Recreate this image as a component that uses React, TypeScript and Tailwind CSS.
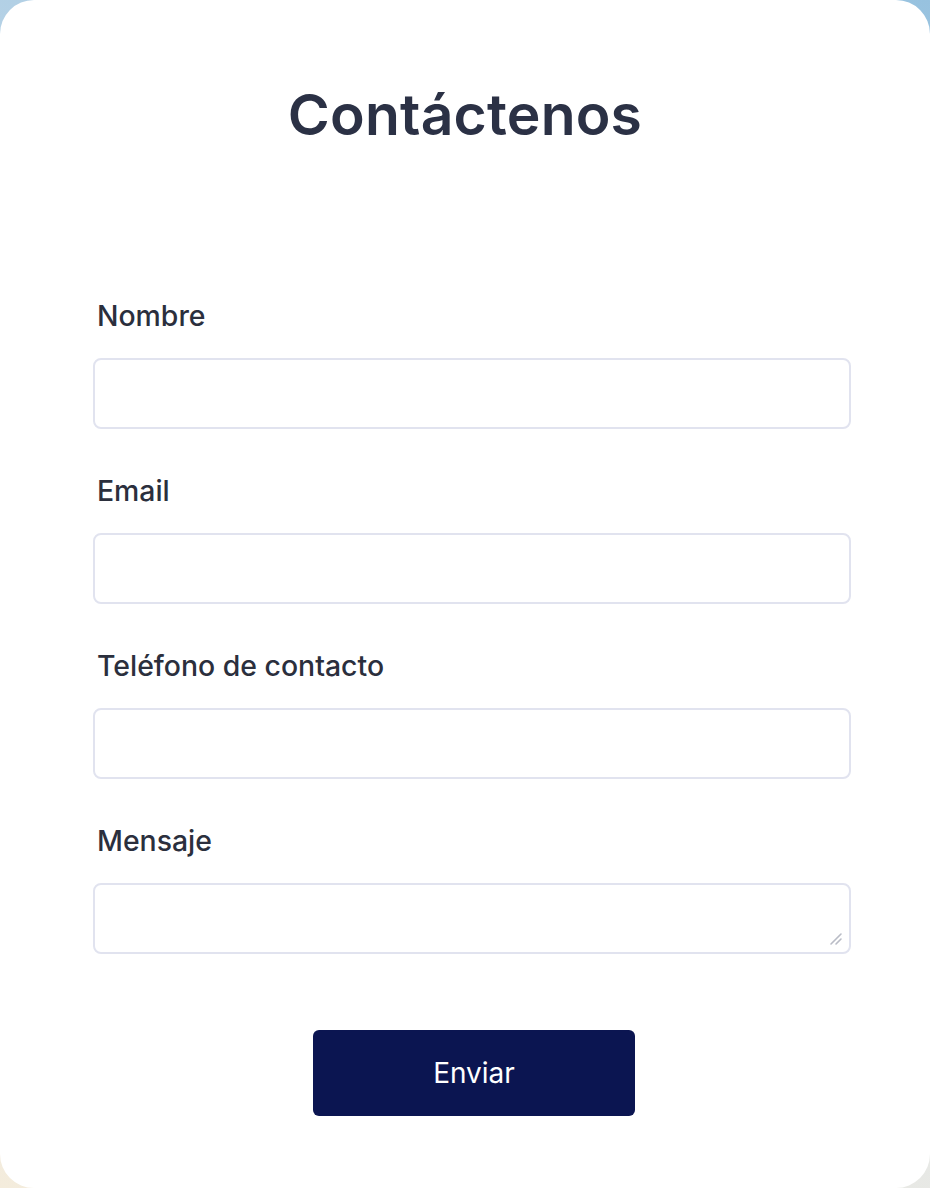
import React from "react";

const fields = [
  { name: "nombre", label: "Nombre", type: "text" },
  { name: "email", label: "Email", type: "email" },
  { name: "telefono", label: "Teléfono de contacto", type: "tel" },
];

export default function App() {
  return (
    <div
      className="w-[930px] h-[1188px] bg-[linear-gradient(200deg,#97c2df_0%,#dbe5ee_55%,#f4ecdc_100%)]"
      style={{ fontFamily: "Inter, 'Noto Sans', sans-serif" }}
    >
      <div className="h-full w-full rounded-[34px] bg-white flex flex-col">
        <h1 className="pt-[81px] text-center text-[57px] leading-[68px] font-semibold text-[#2b3145] tracking-[0.2px]">
          Contáctenos
        </h1>

        <form className="ml-[93px] w-[758px] mt-[147px] flex flex-col" onSubmit={(e) => e.preventDefault()}>
          {fields.map((field) => (
            <div key={field.name} className="flex flex-col mb-[42px]">
              <label htmlFor={field.name} className="pl-[4px] text-[28.4px] leading-[40px] font-medium text-[#2b2f3d]">
                {field.label}
              </label>
              <input
                id={field.name}
                type={field.type}
                className="mt-[22px] h-[71px] w-full rounded-[8px] border-2 border-[#e1e3ef] bg-white px-4 text-[22px] outline-none"
              />
            </div>
          ))}

          <div className="flex flex-col">
            <label htmlFor="mensaje" className="pl-[4px] text-[28.4px] leading-[40px] font-medium text-[#2b2f3d]">
              Mensaje
            </label>
            <div className="relative mt-[22px]">
              <textarea
                id="mensaje"
                className="block h-[71px] w-full resize-none rounded-[8px] border-2 border-[#e1e3ef] bg-white px-4 py-2 text-[22px] outline-none"
              />
              <svg className="absolute right-[8px] bottom-[8px]" width="14" height="14" viewBox="0 0 14 14">
                <path d="M2 12L12 2M7 12L12 7" stroke="#b9bcc6" strokeWidth="1.6" strokeLinecap="round" />
              </svg>
            </div>
          </div>

          <button
            type="submit"
            className="mt-[76px] ml-[220px] w-[322px] h-[86px] rounded-[6px] bg-[#0b1551] text-white text-[28px] font-normal"
          >
            Enviar
          </button>
        </form>
      </div>
    </div>
  );
}
